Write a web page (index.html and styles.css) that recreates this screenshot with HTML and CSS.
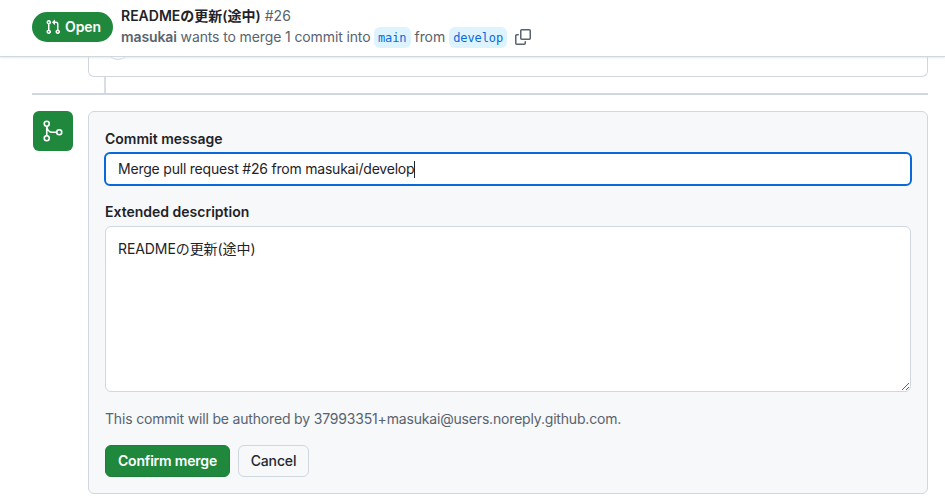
FILE: index.html
```html
<!DOCTYPE html>
<html lang="ja">
<head>
<meta charset="utf-8">
<title>Pull request #26</title>
<link rel="stylesheet" href="styles.css">
</head>
<body>
<header class="header">
  <span class="state">
    <svg width="16" height="16" viewBox="0 0 16 16" fill="currentColor"><path d="M1.5 3.25a2.25 2.25 0 1 1 3 2.122v5.256a2.251 2.251 0 1 1-1.5 0V5.372A2.25 2.25 0 0 1 1.5 3.25Zm5.677-.177L9.573.677A.25.25 0 0 1 10 .854V2.5h1A2.5 2.5 0 0 1 13.5 5v5.628a2.251 2.251 0 1 1-1.5 0V5a1 1 0 0 0-1-1h-1v1.646a.25.25 0 0 1-.427.177L7.177 3.427a.25.25 0 0 1 0-.354ZM3.75 2.5a.75.75 0 1 0 0 1.5.75.75 0 0 0 0-1.5Zm0 9.5a.75.75 0 1 0 0 1.5.75.75 0 0 0 0-1.5Zm8.25.75a.75.75 0 1 0 1.5 0 .75.75 0 0 0-1.5 0Z"/></svg>
    <span>Open</span>
  </span>
  <div class="summary">
    <div class="title"><span class="name">READMEの更新(途中)</span><span class="number">#26</span></div>
    <div class="meta">
      <span class="into"><b>masukai</b> wants to merge 1 commit into</span>
      <span class="branch">main</span>
      <span class="from">from</span>
      <span class="branch">develop</span>
      <svg class="copy" width="16" height="16" viewBox="0 0 16 16" fill="currentColor"><path d="M0 6.75C0 5.784.784 5 1.75 5h1.5a.75.75 0 0 1 0 1.5h-1.5a.25.25 0 0 0-.25.25v7.5c0 .138.112.25.25.25h7.5a.25.25 0 0 0 .25-.25v-1.5a.75.75 0 0 1 1.5 0v1.5A1.75 1.75 0 0 1 9.25 16h-7.5A1.75 1.75 0 0 1 0 14.25Z"/><path d="M5 1.75C5 .784 5.784 0 6.75 0h7.5C15.216 0 16 .784 16 1.75v7.5A1.75 1.75 0 0 1 14.25 11h-7.5A1.75 1.75 0 0 1 5 9.25Zm1.75-.25a.25.25 0 0 0-.25.25v7.5c0 .138.112.25.25.25h7.5a.25.25 0 0 0 .25-.25v-7.5a.25.25 0 0 0-.25-.25Z"/></svg>
    </div>
  </div>
</header>
<main class="content">
  <div class="previous"><div class="avatar"></div></div>
  <div class="timeline"></div>
  <div class="merge">
    <div class="merge-icon">
      <svg width="24" height="24" viewBox="0 0 24 24" fill="none" stroke="currentColor" stroke-width="1.6"><circle cx="5.750" cy="4.800" r="2.500"/><circle cx="5.750" cy="19.200" r="2.500"/><circle cx="18.250" cy="13.200" r="2.500"/><path d="M5.750 7.300V16.700M5.750 7.300C6.250 11 8.500 13.200 11.500 13.200H15.750"/></svg>
    </div>
    <section class="panel">
      <div class="label">Commit message</div>
      <div class="input"><span>Merge pull request #26 from masukai/develop</span><i class="caret"></i></div>
      <label class="label" for="description">Extended description</label>
      <textarea id="description" class="textarea">READMEの更新(途中)</textarea>
      <p class="author">This commit will be authored by 37993351+masukai@users.noreply.github.com.</p>
      <div class="actions">
        <button class="button primary">Confirm merge</button>
        <button class="button">Cancel</button>
      </div>
    </section>
  </div>
</main>
</body>
</html>
```
FILE: styles.css
```css
* { box-sizing: border-box; }
body {
  margin: 0;
  height: 504px;
  overflow: hidden;
  background: #fff;
  color: #1f2328;
  font: 14px/21px Inter, "Noto Sans CJK JP", sans-serif;
}
svg { display: block; flex: none; }
.header {
  display: flex;
  height: 57px;
  padding: 0 32px;
  border-bottom: 1px solid #d0d7de;
  box-shadow: 0 1px 2px rgba(31, 35, 40, .1);
}
.state {
  display: flex;
  align-items: center;
  gap: 4px;
  flex: none;
  width: 81px;
  height: 30px;
  margin-top: 12px;
  padding-left: 13px;
  border-radius: 15px;
  background: #1f883d;
  color: #fff;
  font-weight: 600;
  letter-spacing: -.1px;
}
.state span { padding-bottom: 1px; }
.summary { margin: 5px 0 0 8px; white-space: nowrap; }
.title { display: flex; gap: 4px; height: 21px; }
.name { font-weight: 600; }
.number { color: #59636e; }
.meta { display: flex; align-items: center; height: 22px; color: #59636e; }
.into { width: 253px; padding-bottom: 2px; letter-spacing: -.12px; }
.into b { font-weight: 600; }
.branch {
  height: 21px;
  padding: 1px 4px 0;
  border-radius: 6px;
  background: #ddf4ff;
  color: #0969da;
  font: 12px/21px "DejaVu Sans Mono", monospace;
  letter-spacing: -.1px;
}
.from { margin: 0 4px; padding-bottom: 2px; letter-spacing: -.05px; }
.copy { margin-left: 8px; }
.content { padding: 0 17px 0 32px; }
.previous {
  height: 20px;
  margin-left: 56px;
  padding-left: 17px;
  overflow: hidden;
  border: 1px solid #d0d7de;
  border-top: 0;
  border-radius: 0 0 6px 6px;
}
.avatar {
  width: 24px;
  height: 24px;
  margin-top: -21px;
  border: 1px solid #d0d7de;
  border-radius: 50%;
  background: #f6f8fa;
}
.timeline { height: 18px; border-bottom: 2px solid #d0d7de; padding-left: 72px; }
.timeline::before { content: ""; display: block; width: 2px; height: 16px; background: #d8dee4; }
.merge { display: flex; margin-top: 16px; }
.merge-icon {
  display: grid;
  place-items: center;
  flex: none;
  width: 40px;
  height: 40px;
  margin: 0 15px 0 1px;
  border-radius: 6px;
  background: #1f883d;
  color: #fff;
}
.panel {
  flex: 1;
  height: 383px;
  padding: 16px 16px 0;
  border: 1px solid #d0d7de;
  border-radius: 6px;
  background: #f6f8fa;
}
.label { display: block; font-weight: 600; }
.input {
  display: flex;
  align-items: center;
  height: 34px;
  margin: 3px -1px 15px;
  padding-left: 12px;
  border: 2px solid #0969da;
  border-radius: 6px;
  background: #fff;
}
.input span { padding-bottom: 2px; letter-spacing: -.21px; }
.caret { width: 1px; height: 17px; background: #1f2328; }
.textarea {
  display: block;
  width: 100%;
  height: 166px;
  margin: 4px 0 0;
  padding: 11px 12px;
  border: 1px solid #d0d7de;
  border-radius: 6px;
  outline: 0;
  resize: vertical;
  background: #fff;
  color: #1f2328;
  font: inherit;
  letter-spacing: -.08px;
}
.author { margin: 16px 0; color: #59636e; letter-spacing: -.176px; }
.actions { display: flex; gap: 8px; }
.button {
  width: 71px;
  height: 32px;
  padding: 0;
  border: 1px solid #d0d7de;
  border-radius: 6px;
  background: #f6f8fa;
  color: #24292f;
  font: 500 14px/20px Inter, sans-serif;
  letter-spacing: -.15px;
}
.primary { width: 125px; border-color: #1b7f37; background: #1f883d; color: #fff; font-weight: 600; letter-spacing: -.2px; }
```
